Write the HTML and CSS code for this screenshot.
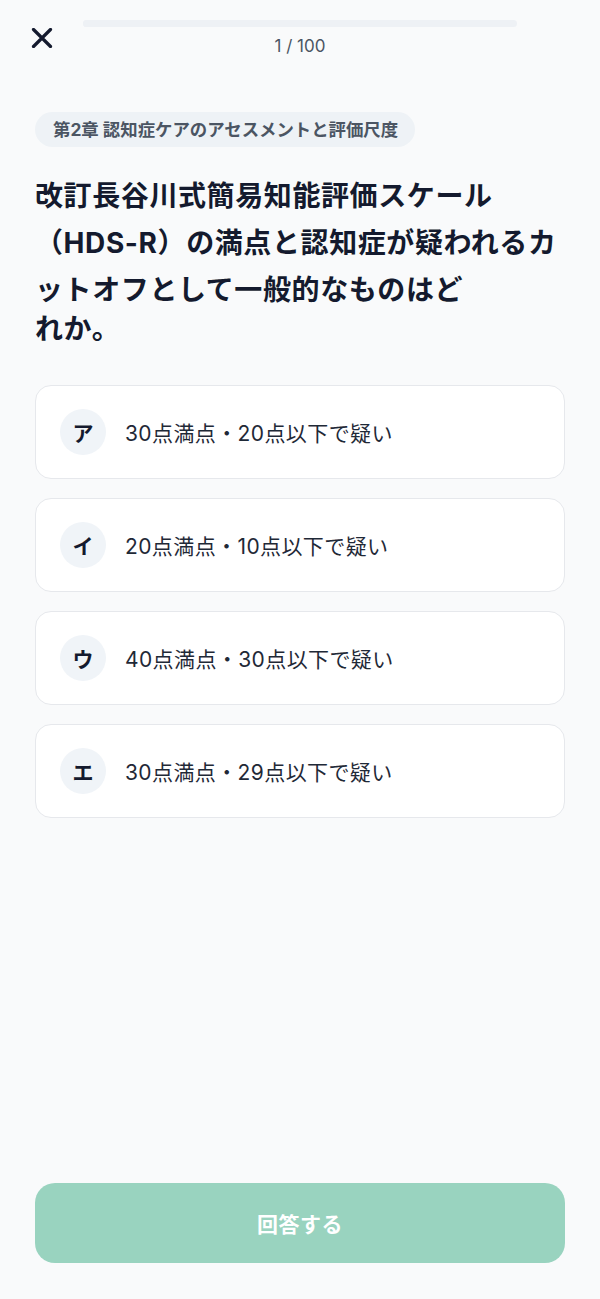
FILE: index.html
```html
<!DOCTYPE html>
<html lang="ja">
<head>
<meta charset="utf-8">
<title>Quiz</title>
<link rel="stylesheet" href="styles.css">
</head>
<body>
<div class="page">
  <header class="header">
    <button class="close" aria-label="閉じる">
      <svg width="22" height="20" viewBox="0 0 22 20"><path d="M2.5 1.5 L19.5 18.5 M19.5 1.5 L2.5 18.5" stroke="#141a2e" stroke-width="3.2" stroke-linecap="round" fill="none"/></svg>
    </button>
    <div class="progress">
      <div class="track"><div class="fill" style="width:1%"></div></div>
      <div class="counter">1 / 100</div>
    </div>
    <div class="spacer"></div>
  </header>

  <main class="content">
    <div class="tag">第2章 認知症ケアのアセスメントと評価尺度</div>
    <h1 class="question">改訂長谷川式簡易知能評価スケール<br>（HDS-R）の満点と認知症が疑われるカ<br>ットオフとして一般的なものはど</h1>
    <p class="question-tail">れか。</p>

    <div class="options">
      <div class="option"><span class="badge">ア</span><span class="label">30点満点・20点以下で疑い</span></div>
      <div class="option"><span class="badge">イ</span><span class="label">20点満点・10点以下で疑い</span></div>
      <div class="option"><span class="badge">ウ</span><span class="label">40点満点・30点以下で疑い</span></div>
      <div class="option"><span class="badge">エ</span><span class="label">30点満点・29点以下で疑い</span></div>
    </div>
  </main>

  <footer class="footer">
    <button class="submit">回答する</button>
  </footer>
</div>
</body>
</html>
```

FILE: styles.css
```css
* { box-sizing: border-box; }
html, body {
  margin: 0;
  padding: 0;
  background: #f9fafb;
}
body {
  font-family: Inter, "Noto Sans CJK JP", "Noto Sans", sans-serif;
  color: #141a2e;
}
.page {
  height: 1299px;
  display: flex;
  flex-direction: column;
}
.header {
  display: grid;
  grid-template-columns: 59px 1fr 59px;
  align-items: center;
  padding: 20px 24px 0;
}
.close {
  width: 36px;
  height: 36px;
  padding: 0;
  border: 0;
  background: transparent;
  display: flex;
  align-items: center;
  justify-content: center;
}
.close svg { display: block; }
.progress {
  display: flex;
  flex-direction: column;
  align-items: center;
}
.track {
  width: 100%;
  height: 7px;
  border-radius: 4px;
  background: #eef1f5;
  overflow: hidden;
}
.fill {
  height: 100%;
  background: #eef1f5;
}
.counter {
  margin-top: 9px;
  font-size: 17px;
  line-height: 20px;
  color: #4b5563;
}
.content {
  flex: 1;
  padding: 0 35px;
}
.tag {
  display: inline-block;
  margin-top: 56px;
  height: 35px;
  line-height: 35px;
  padding: 0 17px 0 18px;
  border-radius: 18px;
  background: #eef2f6;
  color: #4b5563;
  font-size: 17.4px;
  font-weight: 700;
  letter-spacing: 0;
}
.question {
  margin: 26px 0 0;
  font-size: 28px;
  font-weight: 700;
  line-height: 47px;
  letter-spacing: 0.6px;
  color: #141a2e;
}
.question-tail {
  margin: 0;
  font-size: 28px;
  font-weight: 700;
  line-height: 30px;
  letter-spacing: 0.6px;
  color: #141a2e;
}
.options {
  margin-top: 41px;
  display: flex;
  flex-direction: column;
  gap: 19px;
}
.option {
  height: 94px;
  display: flex;
  align-items: center;
  gap: 19px;
  padding: 0 24px;
  background: #ffffff;
  border: 1.5px solid #e6e8ec;
  border-radius: 16px;
}
.badge {
  flex: none;
  width: 46px;
  height: 46px;
  border-radius: 50%;
  background: #f0f4f8;
  display: flex;
  align-items: center;
  justify-content: center;
  font-size: 21px;
  font-weight: 700;
  color: #141a2e;
}
.label {
  font-size: 21px;
  color: #1f2937;
  letter-spacing: 0.4px;
}
.footer {
  padding: 0 35px 36px;
}
.submit {
  width: 100%;
  height: 80px;
  border: 0;
  border-radius: 20px;
  background: #99d3bf;
  color: #ffffff;
  font-family: Inter, "Noto Sans CJK JP", sans-serif;
  font-size: 21px;
  font-weight: 700;
  letter-spacing: 0.5px;
}
```
